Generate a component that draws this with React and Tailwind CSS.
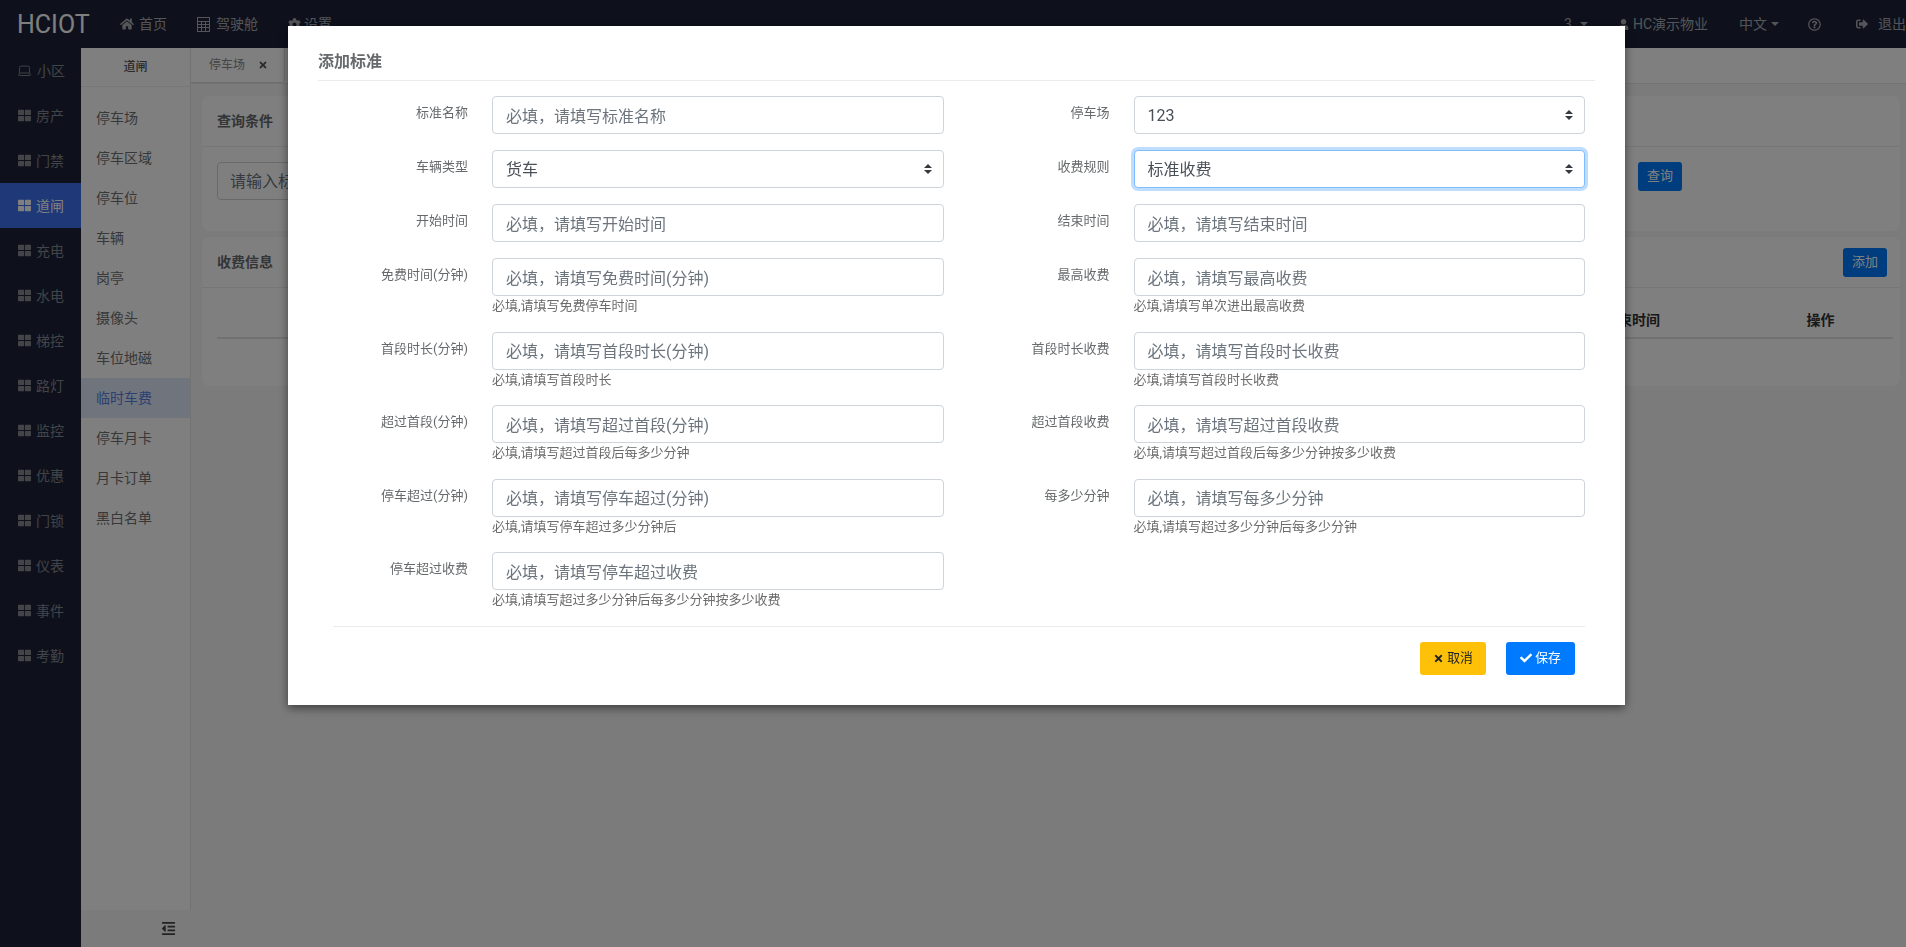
import { Laptop } from "lucide-react";
import {
  FaCheck,
  FaCog,
  FaHome,
  FaOutdent,
  FaRegQuestionCircle,
  FaSignOutAlt,
  FaThLarge,
  FaTimes,
  FaUser,
} from "react-icons/fa";

const rail = ["房产", "门禁", "道闸", "充电", "水电", "梯控", "路灯", "监控", "优惠", "门锁", "仪表", "事件", "考勤"];
const menu = ["停车场", "停车区域", "停车位", "车辆", "岗亭", "摄像头", "车位地磁", "临时车费", "停车月卡", "月卡订单", "黑白名单"];

const fields = [
  { label: "标准名称", placeholder: "必填，请填写标准名称" },
  { label: "停车场", select: "123" },
  { label: "车辆类型", select: "货车" },
  { label: "收费规则", select: "标准收费", focus: true },
  { label: "开始时间", placeholder: "必填，请填写开始时间" },
  { label: "结束时间", placeholder: "必填，请填写结束时间" },
  { label: "免费时间(分钟)", placeholder: "必填，请填写免费时间(分钟)", help: "必填,请填写免费停车时间" },
  { label: "最高收费", placeholder: "必填，请填写最高收费", help: "必填,请填写单次进出最高收费" },
  { label: "首段时长(分钟)", placeholder: "必填，请填写首段时长(分钟)", help: "必填,请填写首段时长" },
  { label: "首段时长收费", placeholder: "必填，请填写首段时长收费", help: "必填,请填写首段时长收费" },
  { label: "超过首段(分钟)", placeholder: "必填，请填写超过首段(分钟)", help: "必填,请填写超过首段后每多少分钟" },
  { label: "超过首段收费", placeholder: "必填，请填写超过首段收费", help: "必填,请填写超过首段后每多少分钟按多少收费" },
  { label: "停车超过(分钟)", placeholder: "必填，请填写停车超过(分钟)", help: "必填,请填写停车超过多少分钟后" },
  { label: "每多少分钟", placeholder: "必填，请填写每多少分钟", help: "必填,请填写超过多少分钟后每多少分钟" },
  { label: "停车超过收费", placeholder: "必填，请填写停车超过收费", help: "必填,请填写超过多少分钟后每多少分钟按多少收费" },
];

function CalcIcon() {
  return (
    <svg viewBox="0 0 13 15" className="h-[15px] w-[13px]" fill="none" stroke="currentColor">
      <rect x="0.5" y="0.5" width="12" height="14" />
      <path d="M0.5 4.5h12M0.5 7.5h12M0.5 10.5h12M4.5 4.5v10M8.5 4.5v10" />
    </svg>
  );
}

function Field({ field }) {
  return (
    <div className="flex gap-6">
      <label className="w-[150px] shrink-0 pt-[7px] text-right text-[13px] leading-[19.5px] text-[#676a6c]">
        {field.label}
      </label>
      <div className="w-[451.5px] pb-4">
        {field.select ? (
          <div className="relative">
            <select
              defaultValue={field.select}
              className={`block h-[38px] w-full appearance-none rounded-[4px] border bg-white px-[13px] pt-[2px] text-base text-[#495057] outline-none ${
                field.focus
                  ? "border-[#80bdff] shadow-[0_0_0_3px_rgba(0,123,255,0.25)]"
                  : "border-[#ced4da]"
              }`}
            >
              <option>{field.select}</option>
            </select>
            <svg viewBox="0 0 4 5" className="absolute top-[14px] right-[12px] h-[10px] w-[8px]">
              <path fill="#343a40" d="M2 0L0 2h4zm0 5L0 3h4z" />
            </svg>
          </div>
        ) : (
          <input
            type="text"
            placeholder={field.placeholder}
            className="block h-[38px] w-full rounded-[4px] border border-[#ced4da] bg-white px-[13px] pt-[2px] text-base text-[#495057] outline-none placeholder:text-[#6c757d]"
          />
        )}
        {field.help && (
          <div className="text-[13px] leading-[19.6px] text-[#6b6b6b]">{field.help}</div>
        )}
      </div>
    </div>
  );
}

export default function App() {
  return (
    <div className="relative flex h-screen w-full flex-col overflow-hidden bg-[#f6f6f6] font-[Roboto,'Noto_Sans_CJK_SC',sans-serif] text-sm">
      {/* TOP BAR */}
      <header className="flex h-12 shrink-0 items-center bg-[#1c2238] text-[#a9abb0]">
        <div className="ml-[17px] w-[72px] text-[25px] leading-none text-white">HCIOT</div>
        <a className="ml-[31px] flex items-center gap-[5px]">
          <FaHome size={14} /> 首页
        </a>
        <a className="ml-[30px] flex items-center gap-[6px]">
          <CalcIcon /> 驾驶舱
        </a>
        <a className="ml-[30px] flex items-center gap-[3px]">
          <FaCog size={13} /> 设置
        </a>

        <div className="ml-auto flex items-center">
          <span className="flex items-center gap-[8px]">
            3 <span className="border-x-4 border-t-4 border-x-transparent border-t-[#a9abb0]" />
          </span>
          <span className="ml-[30px] flex items-center gap-[4px]">
            <FaUser size={11} /> HC演示物业
          </span>
          <span className="ml-[31px] flex items-center gap-[4px]">
            中文 <span className="border-x-4 border-t-4 border-x-transparent border-t-[#a9abb0]" />
          </span>
          <FaRegQuestionCircle size={13} className="ml-[29px]" />
          <FaSignOutAlt size={12} className="ml-[35px]" />
          <span className="ml-[10px]">退出</span>
        </div>
      </header>

      <div className="flex min-h-0 flex-1">
        {/* RAIL */}
        <nav className="w-[81px] shrink-0 bg-[#1c2238] text-[#848891]">
          <a className="flex h-[45px] items-center gap-[5px] pl-[17px]">
            <Laptop size={15} strokeWidth={1.5} /> 小区
          </a>
          {rail.map((name) => (
            <a
              key={name}
              className={`flex h-[45px] items-center gap-[5px] pl-[18px] ${
                name === "道闸" ? "bg-[#3c70f0] text-white" : ""
              }`}
            >
              <FaThLarge size={13} /> {name}
            </a>
          ))}
        </nav>

        {/* SUB MENU */}
        <div className="flex w-[110px] shrink-0 flex-col">
          <div className="min-h-0 flex-1 border-r border-[#e4e4e4] bg-white">
            <div className="mb-[11px] flex h-[39px] items-center justify-center border-b border-[#eeeeee] text-xs font-medium text-[#555555]">
              道闸
            </div>
            {menu.map((name) => (
              <a
                key={name}
                className={`flex h-10 items-center pl-[15px] ${
                  name === "临时车费" ? "bg-[#e0e9fb] text-[#5580e0]" : "text-[#707070]"
                }`}
              >
                {name}
              </a>
            ))}
          </div>
          <div className="flex h-[37px] shrink-0 items-center justify-end pr-[15px] text-[#444444]">
            <FaOutdent size={15} />
          </div>
        </div>

        {/* MAIN */}
        <main className="min-w-0 flex-1">
          <div className="flex h-9 border-b border-[#e7e7e7] bg-white">
            <div className="flex h-[35px] w-[94px] items-center gap-[13px] rounded-br border-r border-b border-[#dddddd] pl-[18px] text-xs text-[#888888]">
              停车场 <FaTimes size={10} className="text-[#555555]" />
            </div>
          </div>

          <div className="mt-3 mr-[6px] ml-[11px] flex flex-col gap-[6px]">
            <section className="h-[135px] rounded-lg bg-white">
              <h3 className="flex h-[51px] items-center border-b border-[#e9ecef] pl-[15px] font-bold text-[#676a6c]">
                查询条件
              </h3>
              <div className="flex pt-[15px] pl-[15px]">
                <input
                  placeholder="请输入标准名称"
                  className="h-[38px] w-[400px] rounded-[4px] border border-[#ced4da] px-3 text-base outline-none placeholder:text-[#6c757d]"
                />
                <button className="mr-[218px] ml-auto h-[29px] w-11 rounded-[3px] bg-[#007bff] text-[13px] text-white">
                  查询
                </button>
              </div>
            </section>

            <section className="h-[149px] rounded-lg bg-white">
              <div className="flex h-[51px] items-center justify-between border-b border-[#e9ecef] pr-[13px] pl-[15px]">
                <h3 className="font-bold text-[#676a6c]">收费信息</h3>
                <button className="h-[29px] w-11 rounded-[3px] bg-[#007bff] text-[13px] text-white">添加</button>
              </div>
              <div className="pt-[5px] pr-[7px] pl-[15px]">
                <table className="w-[1676px] table-fixed border-collapse">
                  <thead>
                    <tr className="border-b-2 border-[#dee2e6] text-center font-bold text-[#333333]">
                      <th className="w-[260px] pt-[17px] pb-[7px]">标准名称</th>
                      <th className="w-[260px] pt-[17px] pb-[7px]">停车场</th>
                      <th className="w-[260px] pt-[17px] pb-[7px]">车辆类型</th>
                      <th className="w-[260px] pt-[17px] pb-[7px]">收费规则</th>
                      <th className="w-[259px] pt-[17px] pb-[7px]">开始时间</th>
                      <th className="w-[232px] pt-[17px] pb-[7px]">结束时间</th>
                      <th className="w-[145px] pt-[17px] pb-[7px]">操作</th>
                    </tr>
                  </thead>
                </table>
              </div>
            </section>
          </div>
        </main>
      </div>

      {/* MODAL */}
      <div className="fixed inset-0 bg-black/50">
        <div className="mt-[26px] ml-[288px] w-[1337px] bg-white px-[30px] pt-6 pb-[30px] shadow-[0_3px_9px_rgba(0,0,0,0.5)]">
          <h4 className="h-[31px] border-b border-[#e9ecef] text-base leading-6 font-bold text-[#676a6c]">
            添加标准
          </h4>
          <form className="mt-[15px]">
            <div className="grid grid-cols-[625.5px_625.5px] gap-x-[16px]">
              {fields.map((field) => (
                <Field key={field.label} field={field} />
              ))}
            </div>
            <div className="ml-[15px] flex w-[1252px] justify-end gap-5 border-t border-[#e9ecef] pt-[15px] pr-[10px]">
              <button
                type="button"
                className="flex h-[33px] w-[66px] items-center justify-center gap-[3px] rounded-[3px] bg-[#ffc107] text-[12.8px] text-[#212529]"
              >
                <FaTimes size={11} /> 取消
              </button>
              <button
                type="button"
                className="flex h-[33px] w-[69px] items-center justify-center gap-[3px] rounded-[3px] bg-[#007bff] text-[12.8px] text-white"
              >
                <FaCheck size={12} /> 保存
              </button>
            </div>
          </form>
        </div>
      </div>
    </div>
  );
}
